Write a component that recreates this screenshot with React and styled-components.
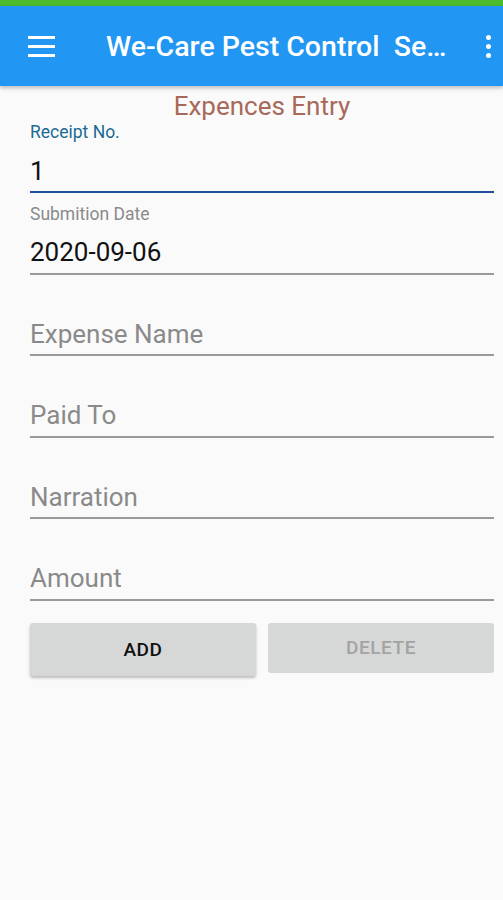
import React, { useState } from "react";
import styled, { createGlobalStyle } from "styled-components";

const GlobalStyle = createGlobalStyle`
  html, body {
    margin: 0;
    padding: 0;
    background: #fafafa;
    font-family: Roboto, "Noto Sans", sans-serif;
  }
  * { box-sizing: border-box; }
`;

const Screen = styled.div`
  width: 503px;
  height: 900px;
  background: #fafafa;
  display: flex;
  flex-direction: column;
  overflow: hidden;
`;

const StatusBar = styled.div`
  height: 6px;
  background: #4cbb2c;
`;

const Toolbar = styled.div`
  height: 80px;
  background: #2196f3;
  display: flex;
  align-items: center;
  padding: 0 0 0 28px;
  box-shadow: 0 2px 4px rgba(0, 0, 0, 0.25);
  position: relative;
  z-index: 1;
`;

const MenuButton = styled.div`
  width: 27px;
  display: flex;
  flex-direction: column;
  gap: 6px;
  span {
    height: 3px;
    background: #fff;
    display: block;
  }
`;

const Title = styled.div`
  margin-left: 51px;
  color: #fff;
  font-size: 28.5px;
  font-weight: 500;
  white-space: pre;
`;

const Overflow = styled.div`
  margin-left: auto;
  width: 26px;
  display: flex;
  flex-direction: column;
  align-items: flex-start;
  gap: 4px;
  padding-left: 9px;
  span {
    width: 5px;
    height: 5px;
    border-radius: 50%;
    background: #fff;
  }
`;

const Form = styled.div`
  padding: 4px 9px 0 30px;
  display: flex;
  flex-direction: column;
`;

const Heading = styled.div`
  text-align: center;
  color: #a8695a;
  font-size: 26px;
  line-height: 32px;
`;

const Field = styled.div`
  display: flex;
  flex-direction: column;
  margin-bottom: 10.6px;
`;

const Label = styled.div`
  font-size: 17.5px;
  line-height: 20px;
  height: 20px;
  color: ${(p) => (p.$active ? "#1b6a93" : "#8a8a8a")};
`;

const Input = styled.input`
  border: none;
  background: transparent;
  outline: none;
  font-family: Roboto, "Noto Sans", sans-serif;
  font-size: 26px;
  color: #111;
  height: 51px;
  padding: 8px 0 0 0;
  border-bottom: 2px solid ${(p) => (p.$active ? "#1f4f9c" : "#9a9a9a")};
  &::placeholder {
    color: #8a8a8a;
  }
`;

const Buttons = styled.div`
  display: grid;
  grid-template-columns: 1fr 1fr;
  gap: 12px;
  margin-top: 11px;
  align-items: start;
`;

const Button = styled.button`
  height: ${(p) => (p.$disabled ? 50 : 53)}px;
  border: none;
  border-radius: 3px;
  background: #d6d7d7;
  font-family: Roboto, "Noto Sans", sans-serif;
  font-size: 19px;
  font-weight: 500;
  letter-spacing: 0.6px;
  color: ${(p) => (p.$disabled ? "#a3a3a3" : "#111")};
  box-shadow: ${(p) => (p.$disabled ? "none" : "0 2px 3px rgba(0,0,0,0.25)")};
`;

const fields = [
  { label: "Receipt No.", value: "1", active: true },
  { label: "Submition Date", value: "2020-09-06" },
  { placeholder: "Expense Name" },
  { placeholder: "Paid To" },
  { placeholder: "Narration" },
  { placeholder: "Amount" },
];

export default function App() {
  const [values, setValues] = useState(fields.map((f) => f.value || ""));

  return (
    <Screen>
      <GlobalStyle />
      <StatusBar />
      <Toolbar>
        <MenuButton>
          <span />
          <span />
          <span />
        </MenuButton>
        <Title>{"We-Care Pest Control  Se…"}</Title>
        <Overflow>
          <span />
          <span />
          <span />
        </Overflow>
      </Toolbar>
      <Form>
        <Heading>Expences Entry</Heading>
        {fields.map((f, i) => (
          <Field key={i}>
            <Label $active={f.active}>{f.label || ""}</Label>
            <Input
              $active={f.active}
              value={values[i]}
              placeholder={f.placeholder}
              onChange={(e) => {
                const next = [...values];
                next[i] = e.target.value;
                setValues(next);
              }}
            />
          </Field>
        ))}
        <Buttons>
          <Button>ADD</Button>
          <Button $disabled>DELETE</Button>
        </Buttons>
      </Form>
    </Screen>
  );
}
